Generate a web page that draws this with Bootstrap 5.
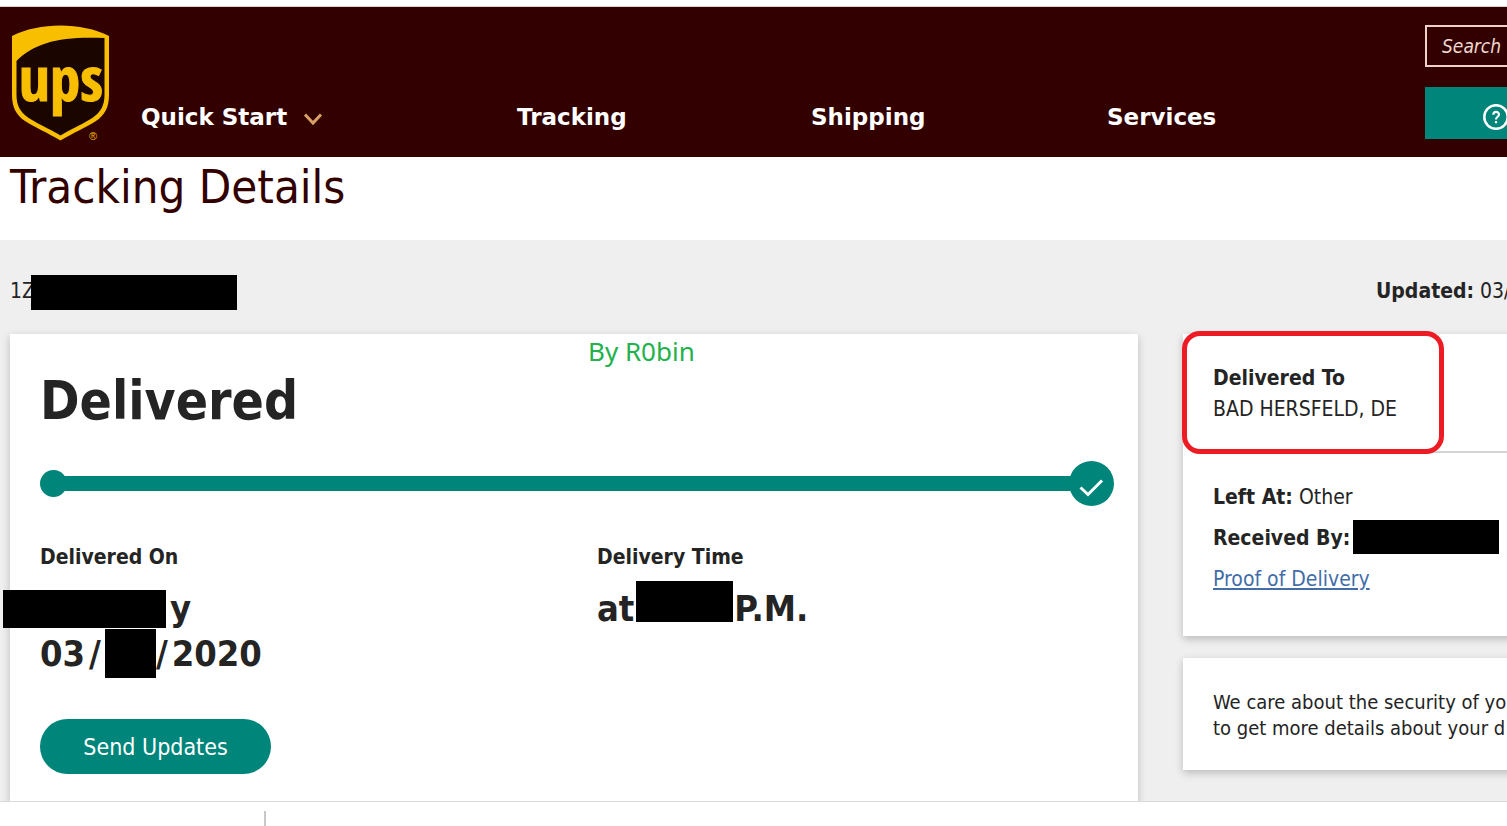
<!DOCTYPE html>
<html lang="en">
<head>
<meta charset="utf-8">
<meta name="viewport" content="width=device-width, initial-scale=1">
<title>Tracking Details | UPS</title>
<link href="https://cdn.jsdelivr.net/npm/bootstrap@5.3.0/dist/css/bootstrap.min.css" rel="stylesheet">
<style>
  :root { --teal: #00857a; --brown: #330000; --ink: #242424; }
  body { font-family: "DejaVu Sans Condensed", "DejaVu Sans", sans-serif; font-size: 21px; line-height: 30px; color: var(--ink); background: #fff; }
  .site-header { background: var(--brown); border-top: 1px solid #ddd6d6; margin-top: 6px; height: 151px; padding-left: 10px; }
  .brand-logo { width: 102px; height: 120px; margin-top: 16px; }
  .main-menu { display: grid; grid-template-columns: 376fr 294fr 296fr 318fr; margin-left: 29px; margin-top: 95px; font: bold 23px/30px "DejaVu Sans", sans-serif; }
  .main-menu a { color: #fff; text-decoration: none; }
  .tools { width: 82px; padding-top: 18px; }
  .search-box { width: 300px; height: 42px; border: 2px solid #f0d0c8; background: transparent; color: #f0d8d0; font-size: 19px; font-style: italic; padding: 0 15px; }
  .search-box::placeholder { color: #f0d8d0; opacity: 1; }
  .help-btn { width: 300px; height: 52px; margin-top: 20px; padding: 6px 0 0 57px; background: var(--teal); border: 0; text-align: left; }
  .page-title { font-size: 47px; line-height: 60px; padding: 0 10px 23px; color: var(--brown); }
  .details { background: #efefef; padding: 35px 0 0 10px; }
  .meta-row { height: 35px; line-height: 33px; }
  .meta-row .updated { padding-left: 193px; }
  .redacted { display: inline-block; background: #000; flex: none; }
  .redacted-number { width: 206px; height: 35px; margin-left: -4px; }
  .redacted-day { width: 163px; height: 38px; margin-left: -37px; }
  .redacted-date { width: 51px; height: 49px; }
  .redacted-time { width: 97px; height: 41px; margin: 0 1px 14px 2px; }
  .redacted-name { width: 146px; height: 34px; margin: 0 0 4px 3px; }
  .panel { background: #fff; box-shadow: 0 3px 8px rgba(0,0,0,.22); }
  .status { padding: 37px 24px 28px 30px; }
  .status h2 { font-size: 53px; line-height: 60px; margin-bottom: 30px; }
  .note { top: 2px; left: 578px; font-family: "Noto Sans", sans-serif; font-size: 26px; color: #22b14c; }
  .track { height: 45px; margin-bottom: 36px; }
  .track .dot { width: 27px; height: 27px; border-radius: 50%; background: var(--teal); }
  .track .line { height: 15px; background: var(--teal); margin: 0 -8px; }
  .facts { display: grid; grid-template-columns: 557fr 517fr; margin-bottom: 43px; }
  .facts h3 { font-size: 21px; line-height: 30px; margin-bottom: 14px; }
  .figure-line { display: flex; align-items: center; height: 45px; font-size: 36px; font-weight: bold; line-height: 45px; }
  .send-btn { width: 231px; height: 55px; border-radius: 28px; background: var(--teal); color: #fff; border: 0; font-size: 23px; }
  .side { width: 324px; flex: none; margin-left: 45px; white-space: nowrap; }
  .side .panel { margin-right: -40px; padding-left: 30px; padding-right: 30px; }
  .dest { line-height: 31px; padding: 29px 0 26px; border-bottom: 2px solid #d4d4d4; }
  .receipt { line-height: 41px; padding: 24px 0 36px; }
  .receipt a { color: #426da9; }
  .side .notice { margin-top: 22px; padding-top: 31px; padding-bottom: 29px; font-size: 20px; line-height: 26px; }
  .highlight { left: -1px; top: -3px; width: 262px; height: 123px; border: 5px solid #ed1c24; border-radius: 18px; pointer-events: none; }
  .bottom-bar { height: 25px; border-top: 1px solid #dadada; background: #fff; padding: 9px 0 0 264px; flex: none; position: relative; }
  .bottom-bar span { border-left: 2px solid #c8c8c8; }
</style>
</head>
<body class="d-flex flex-column vh-100 overflow-hidden">
<header class="site-header d-flex align-items-start overflow-hidden flex-shrink-0">
  <a href="#" class="flex-shrink-0" aria-label="UPS home">
    <svg class="brand-logo d-block" viewBox="10 23 102 120">
      <path fill="#f8be00" d="M12 36C39 22 82 22 109 36V95C109 107 105 115 96 121C87 127 73 133 60.500 140.500C48 133 34 127 25 121C16 115 12 107 12 95Z"/>
      <path fill="#1a0500" d="M16.500 61C35 42 62 36 104.500 38V95C104.500 105 101 112 93 117.500C85 123 73 128 60.500 135.500C48 128 36 123 28 117.500C20 112 16.500 105 16.500 95Z"/>
      <text x="61" y="101" text-anchor="middle" font-family="Liberation Sans Narrow, Open Sans Condensed, Lato, sans-serif" font-weight="bold" font-size="61" fill="#f8be00" stroke="#f8be00">ups</text>
      <text x="93" y="140" text-anchor="middle" font-family="Liberation Sans, sans-serif" font-size="11" fill="#f8be00">®</text>
    </svg>
  </a>
  <nav class="main-menu flex-fill">
    <a href="#">Quick Start<svg class="ms-3" width="20" height="14" viewBox="0 0 20 14" fill="none" stroke="#d9a066" stroke-width="3"><path d="M2 2.500L10 11L18 2.500"/></svg></a>
    <a href="#">Tracking</a>
    <a href="#">Shipping</a>
    <a href="#">Services</a>
  </nav>
  <div class="tools flex-shrink-0">
    <input class="search-box d-block rounded-0" type="search" placeholder="Search" aria-label="Search">
    <button class="help-btn d-block" type="button" aria-label="Help">
      <svg width="28" height="28" viewBox="0 0 28 28" fill="none" stroke="#fff" stroke-width="2.500"><circle cx="14" cy="14" r="11.700"/><path stroke-width="2.200" d="M11.300 11.700C11.300 8 17 8 17 11.500C17 13.800 14 13.800 14 16.500M14 18V20.300"/></svg>
    </button>
  </div>
</header>
<h1 class="page-title m-0 fw-normal flex-shrink-0">Tracking Details</h1>
<main class="details flex-fill overflow-hidden">
  <div class="meta-row d-flex justify-content-between mb-4 text-nowrap">
    <div class="d-flex"><span>1Z</span><span class="redacted redacted-number"></span></div>
    <div class="side"><div class="updated"><strong>Updated:</strong> 03/</div></div>
  </div>
  <div class="d-flex align-items-start">
    <section class="panel status flex-fill position-relative">
      <div class="note position-absolute">By R0bin</div>
      <h2 class="fw-bold">Delivered</h2>
      <div class="track d-flex align-items-center">
        <div class="dot"></div>
        <div class="line flex-fill"></div>
        <svg width="45" height="45" viewBox="0 0 45 45" class="flex-shrink-0 position-relative"><circle cx="22.500" cy="22.500" r="22.500" fill="#00857a"/><path d="M11.500 26.500L19 33.500L33 19.500" fill="none" stroke="#fff" stroke-width="3"/></svg>
      </div>
      <div class="facts">
        <div>
          <h3 class="fw-bold">Delivered On</h3>
          <div class="figure-line"><span class="redacted redacted-day"></span><span class="ms-1">y</span></div>
          <div class="figure-line"><span>03</span><span class="mx-1">/</span><span class="redacted redacted-date"></span><span class="me-1">/</span><span>2020</span></div>
        </div>
        <div>
          <h3 class="fw-bold">Delivery Time</h3>
          <div class="figure-line"><span>at</span><span class="redacted redacted-time"></span><span>P.M.</span></div>
        </div>
      </div>
      <button class="send-btn" type="button">Send Updates</button>
    </section>
    <aside class="side">
      <section class="panel position-relative">
        <div class="dest"><strong>Delivered To</strong><br>BAD HERSFELD, DE</div>
        <div class="receipt">
          <div><strong>Left At:</strong> Other</div>
          <div class="d-flex align-items-center"><strong>Received By:</strong><span class="redacted redacted-name"></span></div>
          <div><a href="#">Proof of Delivery</a></div>
        </div>
        <div class="highlight position-absolute"></div>
      </section>
      <section class="panel notice">We care about the security of yo<br>to get more details about your d</section>
    </aside>
  </div>
</main>
<footer class="bottom-bar d-flex"><span></span></footer>
<script src="https://cdn.jsdelivr.net/npm/bootstrap@5.3.0/dist/js/bootstrap.bundle.min.js"></script>
</body>
</html>
